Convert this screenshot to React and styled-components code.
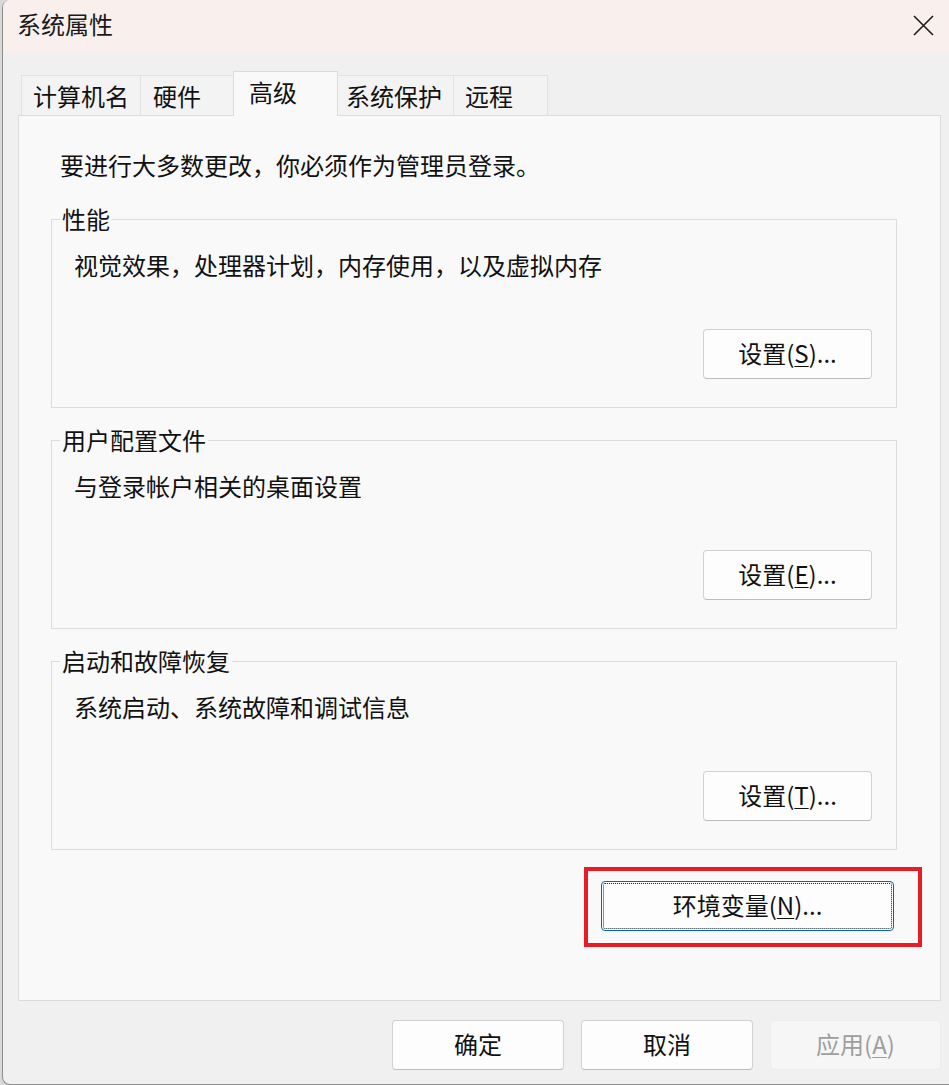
import React from "react";
import styled, { createGlobalStyle } from "styled-components";

const font_stack = `"Noto Sans CJK SC", "Noto Sans", "Liberation Sans", sans-serif`;

const GlobalStyle = createGlobalStyle`
  html, body {
    margin: 0;
    padding: 0;
    background: #d9d9d9;
  }
  body {
    font-family: ${font_stack};
  }
`;

const Window = styled.div`
  box-sizing: border-box;
  margin-left: 2px;
  width: 947px;
  height: 1085px;
  border-left: 1px solid #8e8e8e;
  border-bottom: 1px solid #8e8e8e;
  border-radius: 8px 0 0 8px;
  overflow: hidden;
  background: #f0f0f0;
  display: flex;
  flex-direction: column;
  color: #1a1a1a;
  font-size: 24px;
`;

const TitleBar = styled.div`
  height: 53px;
  flex-shrink: 0;
  box-sizing: border-box;
  background: #f9f0ee;
  display: flex;
  align-items: center;
  justify-content: space-between;
  padding: 0 15px 5px 14px;
`;

const Title = styled.div`
  font-size: 24px;
  line-height: 32px;
`;

const CloseButton = styled.div`
  width: 21px;
  height: 21px;
  display: flex;
  margin-top: 3px;
`;

const Body = styled.div`
  padding: 17px 8px 0 15px;
  display: flex;
  flex-direction: column;
`;

const TabStrip = styled.div`
  display: flex;
  align-items: flex-end;
  height: 45px;
  padding-left: 3px;
`;

const Tab = styled.div`
  box-sizing: border-box;
  width: ${({ w }) => w}px;
  height: ${({ active }) => (active ? 45 : 40)}px;
  margin-left: ${({ first }) => (first ? 0 : -1)}px;
  margin-bottom: ${({ active }) => (active ? -1 : 0)}px;
  padding-left: ${({ pad }) => pad}px;
  padding-top: ${({ active }) => (active ? 0 : 1)}px;
  padding-bottom: ${({ active }) => (active ? 4 : 0)}px;
  display: flex;
  align-items: center;
  border: 1px solid ${({ active }) => (active ? "#dcdcdc" : "#e2e2e2")};
  border-bottom: none;
  background: ${({ active }) => (active ? "#f9f9f9" : "#f3f3f3")};
  position: relative;
  z-index: ${({ active }) => (active ? 1 : 0)};
  font-size: 24px;
  line-height: 32px;
  color: #111;
  white-space: nowrap;
`;

const Panel = styled.div`
  box-sizing: border-box;
  height: 886px;
  background: #f9f9f9;
  border: 1px solid #dcdcdc;
  display: flex;
  flex-direction: column;
`;

const Notice = styled.div`
  margin: 33px 0 0 41px;
  line-height: 32px;
  color: #111;
`;

const GroupList = styled.div`
  display: flex;
  flex-direction: column;
  gap: 16px;
  margin: 22px 43px 0 32px;
`;

const GroupBox = styled.fieldset`
  margin: 0;
  padding: 0;
  border: 1px solid #dcdcdc;
  min-width: 0;
`;

const GroupLabel = styled.legend`
  margin-left: 8px;
  padding: 0 2px;
  line-height: 32px;
  font-size: 24px;
  color: #111;
`;

const GroupBody = styled.div`
  padding: 14px 24px 28px 22px;
  display: flex;
  flex-direction: column;
`;

const GroupText = styled.div`
  line-height: 32px;
  color: #111;
`;

const ButtonRow = styled.div`
  display: flex;
  justify-content: flex-end;
  margin-top: ${({ top }) => top || 0}px;
`;

const Button = styled.button`
  box-sizing: border-box;
  width: ${({ w }) => w}px;
  height: 50px;
  padding: 0 0 2px;
  border-radius: 4px;
  border: 1px solid #d1d1d1;
  border-bottom-color: #bcbcbc;
  background: #fdfdfd;
  font-family: ${font_stack};
  font-size: 24px;
  line-height: 32px;
  color: #111;
  display: flex;
  align-items: center;
  justify-content: center;

  &:disabled {
    background: #f6f6f6;
    border-color: #ececec;
    color: #9e9e9e;
  }
`;

const FocusButton = styled(Button)`
  border: 1px solid #0067c0;
  outline: 1px dotted #222;
  outline-offset: -3px;
`;

const Key = styled.u`
  text-decoration-thickness: 1px;
  text-underline-offset: 3px;
`;

const Highlight = styled.div`
  box-sizing: border-box;
  width: 338px;
  height: 80px;
  border: 4px solid #e81c24;
  padding: 10px 0 0 13px;
`;

const EnvRow = styled.div`
  display: flex;
  justify-content: flex-end;
  margin: 17px 18px 0 0;
`;

const Footer = styled.div`
  display: flex;
  justify-content: flex-end;
  gap: 17px;
  padding-top: 19px;
`;

const tabs = [
  { label: "计算机名", w: 120, pad: 11 },
  { label: "硬件", w: 94, pad: 12 },
  { label: "高级", w: 105, pad: 15, active: true },
  { label: "系统保护", w: 117, pad: 8 },
  { label: "远程", w: 95, pad: 11 },
];

const groups = [
  { label: "性能", text: "视觉效果，处理器计划，内存使用，以及虚拟内存", key: "S" },
  { label: "用户配置文件", text: "与登录帐户相关的桌面设置", key: "E" },
  { label: "启动和故障恢复", text: "系统启动、系统故障和调试信息", key: "T" },
];

function CloseIcon() {
  return (
    <svg width="21" height="21" viewBox="0 0 21 21">
      <path d="M1 1 L20 20 M20 1 L1 20" stroke="#1b1b1b" strokeWidth="1.6" fill="none" />
    </svg>
  );
}

export default function App() {
  return (
    <>
      <GlobalStyle />
      <Window>
        <TitleBar>
          <Title>系统属性</Title>
          <CloseButton>
            <CloseIcon />
          </CloseButton>
        </TitleBar>
        <Body>
          <TabStrip>
            {tabs.map((tab, index) => (
              <Tab key={tab.label} w={tab.w} pad={tab.pad} active={tab.active} first={index === 0}>
                {tab.label}
              </Tab>
            ))}
          </TabStrip>
          <Panel>
            <Notice>要进行大多数更改，你必须作为管理员登录。</Notice>
            <GroupList>
              {groups.map((group) => (
                <GroupBox key={group.label}>
                  <GroupLabel>{group.label}</GroupLabel>
                  <GroupBody>
                    <GroupText>{group.text}</GroupText>
                    <ButtonRow top={48}>
                      <Button w={169}>
                        设置(<Key>{group.key}</Key>)...
                      </Button>
                    </ButtonRow>
                  </GroupBody>
                </GroupBox>
              ))}
            </GroupList>
            <EnvRow>
              <Highlight>
                <FocusButton w={293}>
                  环境变量(<Key>N</Key>)...
                </FocusButton>
              </Highlight>
            </EnvRow>
          </Panel>
          <Footer>
            <Button w={172}>确定</Button>
            <Button w={172}>取消</Button>
            <Button w={171} disabled>
              应用(<Key>A</Key>)
            </Button>
          </Footer>
        </Body>
      </Window>
    </>
  );
}
